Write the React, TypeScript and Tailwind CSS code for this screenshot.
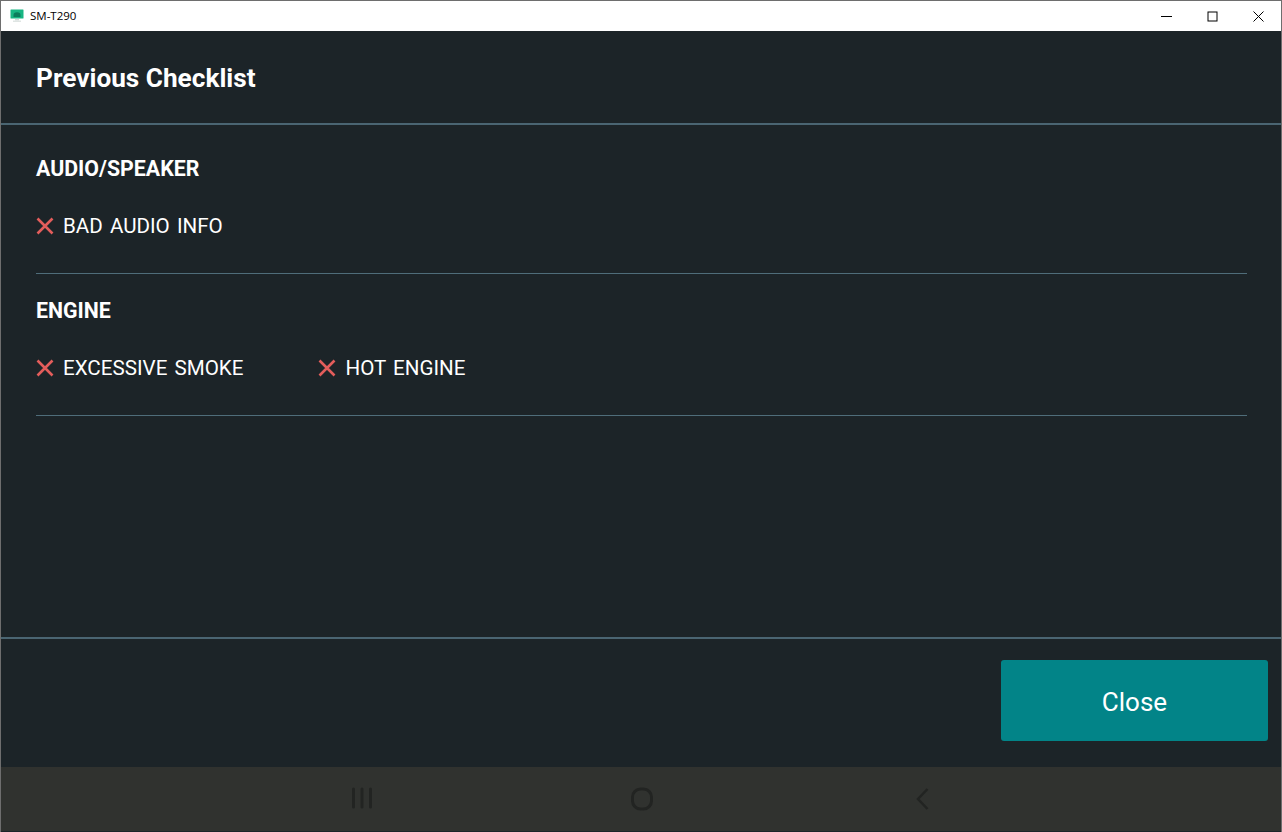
function Issue({ label }: { label: string }) {
  return (
    <div className="flex items-center">
      <svg width="18" height="18" viewBox="0 0 18 18" className="shrink-0">
        <path d="M1.5 1.5 L16.5 16.5 M16.5 1.5 L1.5 16.5" stroke="#e35d5b" strokeWidth="2.6" fill="none" />
      </svg>
      <span className="ml-[9px] text-[20.6px] leading-[24px] [word-spacing:2px] text-white">{label}</span>
    </div>
  );
}

function Section({ title, items }: { title: string; items: string[] }) {
  return (
    <section className="mr-[34px] ml-[35px] h-[142px] border-b border-[#4f6d7a] pt-[24px]">
      <h2 className="text-[21.33px] leading-[26px] font-bold text-white">{title}</h2>
      <div className="mt-[32px] flex gap-[75px]">
        {items.map((item) => (
          <Issue key={item} label={item} />
        ))}
      </div>
    </section>
  );
}

export default function App() {
  return (
    <div className="flex h-[832px] w-[1282px] flex-col overflow-hidden border border-b-0 border-[#6e6e6e] bg-[#1c2428] font-['Roboto',sans-serif]">
      {/* Window title bar */}
      <div className="flex h-[30px] shrink-0 items-center bg-white pl-[9px] text-black">
        <svg width="14" height="14" viewBox="0 0 14 14" className="shrink-0">
          <rect x="0.5" y="0.5" width="13" height="9" rx="0.5" fill="#17b582" />
          <path d="M3.5 8 V6 a3.5 2.8 0 0 1 7 0 V8 Z" fill="#0b7d5c" />
          <rect x="5" y="10" width="4" height="1.5" fill="#cfd8d5" />
          <rect x="3" y="11.5" width="8" height="1.5" fill="#dfe5e3" />
        </svg>
        <span className="ml-[6px] font-['Open_Sans',sans-serif] text-[11.5px]">SM-T290</span>
        <div className="ml-auto flex items-center">
          <div className="flex h-[30px] w-[46px] items-center justify-center">
            <svg width="11" height="11" viewBox="0 0 11 11">
              <path d="M0 5.5 H11" stroke="#000" strokeWidth="1" />
            </svg>
          </div>
          <div className="flex h-[30px] w-[46px] items-center justify-center">
            <svg width="11" height="11" viewBox="0 0 11 11" fill="none">
              <rect x="1" y="1" width="9" height="9" stroke="#000" strokeWidth="1" />
            </svg>
          </div>
          <div className="flex h-[30px] w-[46px] items-center justify-center">
            <svg width="11" height="11" viewBox="0 0 11 11">
              <path d="M0.5 0.5 L10.5 10.5 M10.5 0.5 L0.5 10.5" stroke="#000" strokeWidth="1" />
            </svg>
          </div>
        </div>
      </div>

      {/* Header */}
      <header className="flex h-[94px] shrink-0 items-center border-b-2 border-[#4a6572] px-[35px] pt-[3px]">
        <h1 className="text-[26.2px] font-bold text-white">Previous Checklist</h1>
      </header>

      {/* Checklist */}
      <main className="h-[514px] shrink-0 border-b-2 border-[#4a6572] pt-[7px]">
        <Section title="AUDIO/SPEAKER" items={["BAD AUDIO INFO"]} />
        <Section title="ENGINE" items={["EXCESSIVE SMOKE", "HOT ENGINE"]} />
      </main>

      {/* Footer */}
      <footer className="flex h-[128px] shrink-0 justify-end pt-[21px] pr-[13px]">
        <button className="h-[81px] w-[267px] rounded-[3px] bg-[#028488] pt-[3px] text-[26px] text-white">Close</button>
      </footer>

      {/* Android nav bar */}
      <div className="flex h-[64px] shrink-0 items-center bg-[#30322f]">
        <svg width="1280" height="64" viewBox="0 0 1280 64" fill="none" stroke="#222422">
          <path d="M352.5 22 V40 M361 22 V40 M369.5 22 V40" strokeWidth="3" strokeLinecap="round" />
          <rect x="631.5" y="22" width="19" height="20" rx="8" strokeWidth="3" />
          <path d="M926.5 22 L917 32 L926.5 42" strokeWidth="2.5" />
        </svg>
      </div>
    </div>
  );
}
